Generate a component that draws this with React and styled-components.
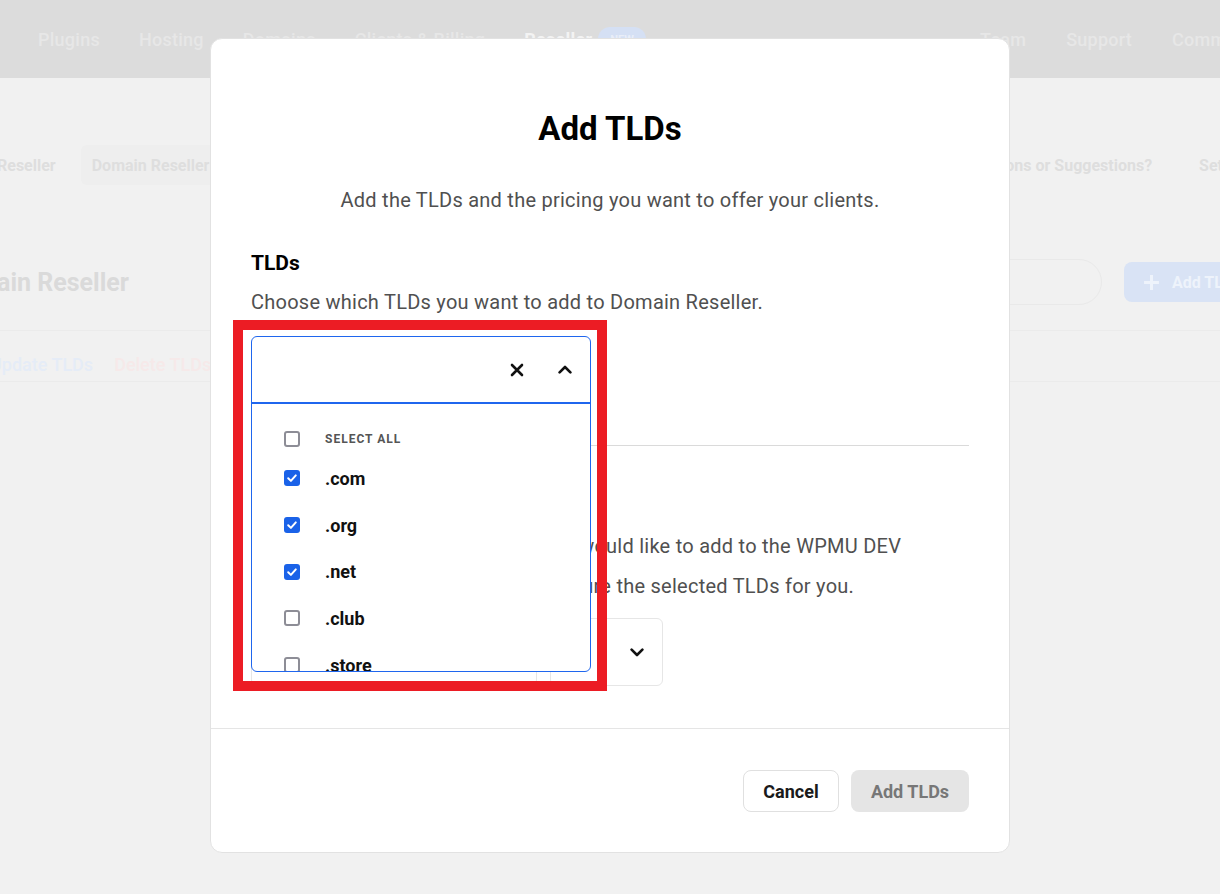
import React from "react";
import styled, { createGlobalStyle } from "styled-components";

const GlobalStyle = createGlobalStyle`
  * { box-sizing: border-box; }
  html, body { margin: 0; padding: 0; }
  body {
    width: 1220px;
    height: 894px;
    overflow: hidden;
    background: #f1f1f1;
    font-family: Roboto, "Liberation Sans", Arial, sans-serif;
  }
`;

/* ---------- faded page behind the modal ---------- */

const TopNav = styled.nav`
  height: 78px;
  background: #dcdcdc;
  display: flex;
  align-items: center;
  padding-left: 38px;
  overflow: hidden;
  white-space: nowrap;
`;

const NavGroup = styled.div`
  display: flex;
  align-items: center;
  gap: 39px;
`;

const NavRight = styled(NavGroup)`
  gap: 40px;
  margin-left: auto;
  width: 240px;
  flex-shrink: 0;
`;

const NavLink = styled.span`
  font-size: 18px;
  letter-spacing: 0.25px;
  font-weight: ${p => (p.$active ? 700 : 500)};
  color: ${p => (p.$active ? "#f3f3f3" : "#e7e7e7")};
  display: flex;
  align-items: center;
`;

const Badge = styled.span`
  margin-left: 6px;
  height: 24px;
  padding: 0 12px;
  border-radius: 12px;
  background: #d5e0f4;
  color: #e9eef8;
  font-size: 11px;
  letter-spacing: 0;
  font-weight: 700;
  display: flex;
  align-items: center;
`;

const Page = styled.main`
  width: 1314px;
  margin-left: -55px;
`;

const TabsRow = styled.div`
  display: flex;
  align-items: center;
  height: 40px;
  margin-top: 67px;
  padding-left: 41px;
  gap: 14px;
`;

const Tab = styled.div`
  height: 40px;
  padding: 0 11px;
  display: flex;
  align-items: center;
  border-radius: 6px;
  font-size: 16px;
  font-weight: 700;
  color: #dedede;
  background: ${p => (p.$active ? "#eeeeee" : "transparent")};
`;

const TabLinks = styled.div`
  margin-left: auto;
  display: flex;
  gap: 47px;
  font-size: 16px;
  font-weight: 700;
  color: #dedede;
`;

const HeaderRow = styled.div`
  margin-top: 74px;
  margin-right: -3px;
  height: 46px;
  display: flex;
  align-items: center;
  justify-content: space-between;
`;

const PageTitle = styled.h1`
  margin: 0;
  font-size: 25px;
  font-weight: 700;
  color: #dadada;
`;

const HeaderActions = styled.div`
  display: flex;
  align-items: center;
  gap: 22px;
`;

const SearchPill = styled.div`
  width: 250px;
  height: 46px;
  border: 1px solid #e9e9e9;
  border-radius: 23px;
`;

const FadedButton = styled.div`
  height: 40px;
  width: 138px;
  padding: 0 19px;
  display: flex;
  align-items: center;
  gap: 12px;
  border-radius: 8px;
  background: #d9e3f5;
  color: #eef3fb;
  font-size: 16px;
  font-weight: 700;
  white-space: nowrap;
  svg { flex-shrink: 0; }
`;

const Toolbar = styled.div`
  margin-top: 25px;
  border-top: 1px solid #ebebeb;
  border-bottom: 1px solid #ebebeb;
  padding: 22px 0 4px 45px;
  display: flex;
  gap: 21px;
  font-size: 18px;
  font-weight: 500;
  line-height: 24px;
`;

const ToolLink = styled.span`
  color: ${p => (p.$danger ? "#f6e9e9" : "#e5ecf7")};
`;

/* ---------- modal ---------- */

const Overlay = styled.div`
  position: fixed;
  inset: 0;
  display: flex;
  justify-content: center;
  align-items: flex-start;
  padding-top: 38px;
`;

const Modal = styled.div`
  width: 800px;
  background: #fff;
  border: 1px solid #e2e2e2;
  border-radius: 12px;
`;

const ModalBody = styled.div`
  padding: 70px 40px 42px;
`;

const Title = styled.h2`
  margin: 0;
  font-size: 33px;
  line-height: 40px;
  font-weight: 700;
  color: #000;
  text-align: center;
`;

const Subtitle = styled.p`
  margin: 37px 0 0;
  font-size: 20px;
  letter-spacing: 0.25px;
  line-height: 28px;
  color: #505050;
  text-align: center;
`;

const Label = styled.h3`
  margin: ${p => p.$top || 34}px 0 0;
  font-size: 21px;
  line-height: 30px;
  font-weight: 700;
  color: #000;
`;

const Text = styled.p`
  margin: 10px 0 0;
  font-size: 20px;
  letter-spacing: 0.25px;
  line-height: 28px;
  color: #505050;
`;

const TallText = styled.p`
  margin: 20px 0 0;
  font-size: 20px;
  letter-spacing: 0.25px;
  line-height: 40px;
  color: #505050;
  white-space: nowrap;
  span { display: block; }
`;

const Divider = styled.hr`
  margin: 41px 0 0;
  border: 0;
  height: 1px;
  background: #dadada;
`;

const SelectWrap = styled.div`
  position: relative;
  margin-top: 20px;
  width: 340px;
  height: 68px;
`;

const Dropdown = styled.div`
  position: absolute;
  top: 0;
  left: 0;
  width: 340px;
  height: 336px;
  z-index: 2;
  display: flex;
  flex-direction: column;
  background: #fff;
  border: 1px solid #1f66ee;
  border-radius: 6px;
  overflow: hidden;
`;

const DropdownHead = styled.div`
  height: 67px;
  flex-shrink: 0;
  border-bottom: 2px solid #1f66ee;
  display: flex;
  align-items: center;
  justify-content: flex-end;
  gap: 34px;
  padding-right: 18px;
`;

const OptionList = styled.div`
  padding: 18px 0 0 32px;
`;

const Option = styled.div`
  height: ${p => (p.$head ? "33px" : "46.7px")};
  display: flex;
  align-items: center;
  gap: 25px;
  font-size: ${p => (p.$head ? "12px" : "18px")};
  letter-spacing: ${p => (p.$head ? "1px" : "0")};
  font-weight: 700;
  color: ${p => (p.$head ? "#555" : "#111")};
`;

const Box = styled.span`
  width: 16px;
  height: 16px;
  flex-shrink: 0;
  border-radius: 3px;
  display: flex;
  align-items: center;
  justify-content: center;
  background: ${p => (p.$checked ? "#1a62e8" : "#fff")};
  border: ${p => (p.$checked ? "none" : "2px solid #8d8d96")};
`;

const Highlight = styled.div`
  position: absolute;
  left: -18px;
  top: -16px;
  width: 374px;
  height: 371px;
  border: 10px solid #ec1c24;
  z-index: 3;
  pointer-events: none;
`;

const InputRow = styled.div`
  margin-top: 12px;
  display: flex;
  gap: 13px;
`;

const Field = styled.div`
  width: ${p => p.$w}px;
  height: 68px;
  border: 1px solid #e6e6e6;
  border-radius: 6px;
  display: flex;
  align-items: center;
  justify-content: flex-end;
  padding-right: 18px;
`;

const Footer = styled.div`
  border-top: 1px solid #e5e5e5;
  padding: 41px 40px 40px;
  display: flex;
  justify-content: flex-end;
  gap: 12px;
`;

const Button = styled.button`
  width: ${p => p.$w}px;
  height: 42px;
  padding: 0;
  border-radius: 8px;
  font-family: inherit;
  font-size: 18px;
  font-weight: 700;
  cursor: pointer;
  border: ${p => (p.$primary ? "none" : "1px solid #e0e0e0")};
  background: ${p => (p.$primary ? "#e5e5e5" : "#fff")};
  color: ${p => (p.$primary ? "#777" : "#1a1a1a")};
`;

const CloseIcon = () => (
  <svg width="14" height="14" viewBox="0 0 14 14">
    <path d="M2 2 L12 12 M12 2 L2 12" stroke="#111" strokeWidth="2.6" strokeLinecap="round" />
  </svg>
);

const Chevron = ({ up }) => (
  <svg width="14" height="9" viewBox="0 0 14 9">
    <path
      d={up ? "M1.6 7.4 L7 2 L12.4 7.4" : "M1.6 1.6 L7 7 L12.4 1.6"}
      fill="none"
      stroke="#111"
      strokeWidth="2.6"
      strokeLinecap="round"
      strokeLinejoin="round"
    />
  </svg>
);

const Check = () => (
  <svg width="12" height="12" viewBox="0 0 12 12">
    <path d="M2.2 6.3 L4.9 8.9 L9.8 3.4" fill="none" stroke="#fff" strokeWidth="2" strokeLinecap="round" strokeLinejoin="round" />
  </svg>
);

const tlds = [
  { name: ".com", checked: true },
  { name: ".org", checked: true },
  { name: ".net", checked: true },
  { name: ".club", checked: false },
  { name: ".store", checked: false },
  { name: ".online", checked: false },
];

export default function App() {
  return (
    <>
      <GlobalStyle />
      <TopNav>
        <NavGroup>
          <NavLink>Plugins</NavLink>
          <NavLink>Hosting</NavLink>
          <NavLink>Domains</NavLink>
          <NavLink>Clients &amp; Billing</NavLink>
          <NavLink $active>
            Reseller<Badge>NEW</Badge>
          </NavLink>
        </NavGroup>
        <NavRight>
          <NavLink>Team</NavLink>
          <NavLink>Support</NavLink>
          <NavLink>Community</NavLink>
        </NavRight>
      </TopNav>

      <Page>
        <TabsRow>
          <Tab>Reseller</Tab>
          <Tab $active>Domain Reseller</Tab>
          <TabLinks>
            <span>Questions or Suggestions?</span>
            <span>Settings</span>
          </TabLinks>
        </TabsRow>
        <HeaderRow>
          <PageTitle>Domain Reseller</PageTitle>
          <HeaderActions>
            <SearchPill />
            <FadedButton>
              <svg width="17" height="17" viewBox="0 0 16 16">
                <path d="M8 1 V15 M1 8 H15" stroke="#eef3fb" strokeWidth="2.8" />
              </svg>
              Add TLDs
            </FadedButton>
          </HeaderActions>
        </HeaderRow>
        <Toolbar>
          <ToolLink>Update TLDs</ToolLink>
          <ToolLink $danger>Delete TLDs</ToolLink>
        </Toolbar>
      </Page>

      <Overlay>
        <Modal>
          <ModalBody>
            <Title>Add TLDs</Title>
            <Subtitle>Add the TLDs and the pricing you want to offer your clients.</Subtitle>
            <Label>TLDs</Label>
            <Text>Choose which TLDs you want to add to Domain Reseller.</Text>
            <SelectWrap>
              <Dropdown>
                <DropdownHead>
                  <CloseIcon />
                  <Chevron up />
                </DropdownHead>
                <OptionList>
                  <Option $head>
                    <Box />
                    SELECT ALL
                  </Option>
                  {tlds.map(t => (
                    <Option key={t.name}>
                      <Box $checked={t.checked}>{t.checked && <Check />}</Box>
                      {t.name}
                    </Option>
                  ))}
                </OptionList>
              </Dropdown>
              <Highlight />
            </SelectWrap>
            <Divider />
            <Label $top={30}>Pricing</Label>
            <TallText>
              <span>Choose the markup percentage you would like to add to the WPMU DEV</span>
              <span>base prices per TLD, and we'll configure the selected TLDs for you.</span>
            </TallText>
            <InputRow>
              <Field $w={286} />
              <Field $w={113}>
                <Chevron />
              </Field>
            </InputRow>
          </ModalBody>
          <Footer>
            <Button $w={96}>Cancel</Button>
            <Button $w={118} $primary>Add TLDs</Button>
          </Footer>
        </Modal>
      </Overlay>
    </>
  );
}
